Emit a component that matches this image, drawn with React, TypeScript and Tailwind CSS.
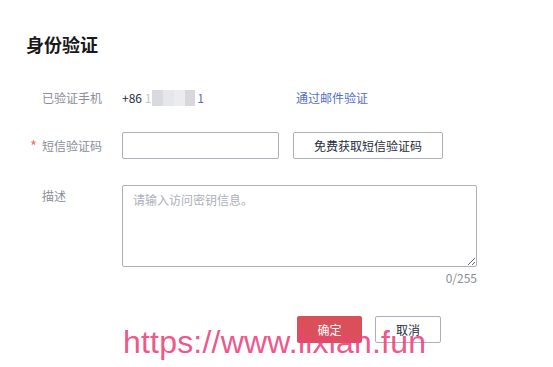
import React from "react";

const cjk = "font-['Microsoft_YaHei','Noto_Sans_CJK_SC',sans-serif]";

export default function App() {
  return (
    <div className={`relative w-[553px] h-[367px] overflow-hidden bg-white ${cjk}`}>
      <div className="pl-[26px] pt-[32px]">
        <h1 className="text-[18px] leading-[24px] font-bold text-[#191919]">身份验证</h1>
      </div>

      <div className="mt-[30px] pl-[30px]">
        {/* verified phone */}
        <div className="flex items-center h-[24px]">
          <div className="w-[92px] pl-[12px] text-[12px] text-[#8a8e99]">已验证手机</div>
          <div className="w-[174px] flex items-center text-[12px] text-[#252b3a]">
            <span>+86&nbsp;</span>
            <span className="text-[#c2c5cc]">1</span>
            <span className="ml-[1px] flex h-[16px]">
              <span className="w-[11px] bg-[#d8dadf]" />
              <span className="w-[11px] bg-[#e6e7ea]" />
              <span className="w-[11px] bg-[#ececee]" />
              <span className="w-[10px] bg-[#d6d8dc]" />
            </span>
            <span className="ml-[2px] text-[#526ecc]">1</span>
          </div>
          <a className="text-[12px] text-[#526ecc]">通过邮件验证</a>
        </div>

        {/* sms code */}
        <div className="mt-[22px] flex items-center h-[27px]">
          <div className="w-[92px] flex items-center text-[12px] text-[#8a8e99]">
            <span className="w-[12px] text-[15px] text-[#f66f6a] leading-none">*</span>
            <span>短信验证码</span>
          </div>
          <input
            type="text"
            className="w-[157px] h-[27px] border border-[#adb0b8] rounded-[2px] px-2 text-[12px] outline-none"
          />
          <button
            type="button"
            className="ml-[14px] w-[150px] h-[27px] border border-[#adb0b8] rounded-[2px] bg-white text-[12px] text-[#252b3a]"
          >
            免费获取短信验证码
          </button>
        </div>

        {/* description */}
        <div className="mt-[26px] flex">
          <div className="w-[92px] pl-[12px] pt-[2px] text-[12px] leading-[18px] text-[#8a8e99]">描述</div>
          <div className="w-[355px]">
            <textarea
              placeholder="请输入访问密钥信息。"
              className="block w-[355px] h-[82px] border border-[#adb0b8] rounded-[2px] px-[10px] py-[5px] text-[12px] leading-[18px] text-[#252b3a] placeholder:text-[#adb0b8] outline-none"
            />
            <div className="mt-[3px] text-right text-[12px] leading-[16px] text-[#8a8e99]">0/255</div>
          </div>
        </div>

        {/* actions */}
        <div className="mt-[30px] flex pl-[267px] gap-[13px]">
          <button
            type="button"
            className="w-[65px] h-[27px] rounded-[2px] bg-[#d9505a] text-[12px] text-white"
          >
            确定
          </button>
          <button
            type="button"
            className="w-[66px] h-[27px] border border-[#adb0b8] rounded-[2px] bg-white text-[12px] text-[#252b3a]"
          >
            取消
          </button>
        </div>
      </div>

      <div className="absolute left-[123px] top-[322px] text-[32px] leading-[40px] tracking-[0.2px] text-[#f0407a]/90 font-['Liberation_Sans',sans-serif] pointer-events-none">
        https://www.lixian.fun
      </div>
    </div>
  );
}
